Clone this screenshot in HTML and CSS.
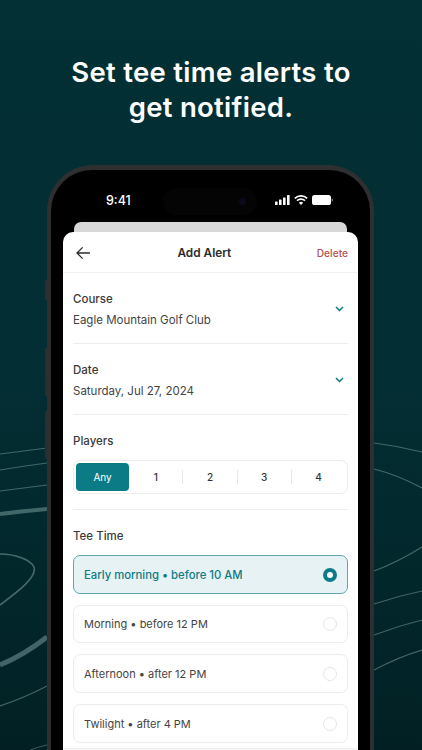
FILE: index.html
```html
<!DOCTYPE html>
<html lang="en">
<head>
<meta charset="utf-8">
<title>Add Alert</title>
<link rel="stylesheet" href="styles.css">
</head>
<body>
<main class="stage">
  <svg class="contours" viewBox="0 0 422 750" aria-hidden="true">
    <g fill="none" stroke="#5d8283">
      <path d="M0 454 Q24 451 47 448" stroke-width="1.2" opacity=".7"/>
      <path d="M0 470 Q24 466 47 463" stroke-width="1.2" opacity=".7"/>
      <path d="M0 491 Q24 488 47 485" stroke-width="1.2" opacity=".7"/>
      <path d="M0 514 Q24 511 47 509" stroke-width="4" opacity=".7"/>
      <path d="M0 554 C14 554 30 559 34 567 C37 577 20 590 0 605" stroke-width="1.6" opacity=".75"/>
      <path d="M0 665 Q24 655 47 637" stroke-width="5" opacity=".7"/>
      <path d="M0 706 Q24 698 47 686" stroke-width="1.2" opacity=".7"/>
      <path d="M30 750 Q38 747 47 745" stroke-width="1" opacity=".6"/>
      <path d="M374 443 Q398 446 422 452" stroke-width="1.2" opacity=".7"/>
      <path d="M374 469 Q398 475 422 488" stroke-width="1.2" opacity=".7"/>
      <path d="M374 571 Q398 562 422 547" stroke-width="1.2" opacity=".7"/>
      <path d="M374 604 Q398 596 422 591" stroke-width="1.2" opacity=".7"/>
      <path d="M374 635 Q398 626 422 620" stroke-width="1.2" opacity=".7"/>
      <path d="M374 670 Q398 657 422 650" stroke-width="1.2" opacity=".7"/>
    </g>
  </svg>

  <h1 class="headline">Set tee time alerts to<br>get notified.</h1>

  <div class="phone">
    <span class="side-btn side-a"></span>
    <span class="side-btn side-b"></span>
    <span class="side-btn side-c"></span>
    <div class="screen">
      <div class="status">
        <span class="clock">9:41</span>
        <span class="island"><span class="lens"></span></span>
        <span class="status-icons">
          <svg width="15" height="10" viewBox="0 0 15 10"><g fill="#fff"><rect x="0" y="6.5" width="2.6" height="3.5" rx=".6"/><rect x="4" y="4.5" width="2.6" height="5.5" rx=".6"/><rect x="8" y="2.5" width="2.6" height="7.5" rx=".6"/><rect x="12" y="0" width="2.6" height="10" rx=".6"/></g></svg>
          <svg width="14" height="10" viewBox="0 0 14 10"><g fill="none" stroke="#fff" stroke-width="1.6"><path d="M.8 3.4a9 9 0 0 1 12.4 0"/><path d="M3 5.7a5.8 5.8 0 0 1 8 0"/></g><path d="M7 10 4.9 7.8a3 3 0 0 1 4.2 0z" fill="#fff"/></svg>
          <svg width="21" height="10" viewBox="0 0 21 10"><rect x="0" y="0" width="19" height="10" rx="2.6" fill="#fff"/><path d="M19.7 3.4c.8.2 1.3.8 1.3 1.6s-.5 1.4-1.3 1.6z" fill="#8a8a8a"/></svg>
        </span>
      </div>
      <div class="sheet-back"></div>
      <section class="sheet">
        <header class="nav">
          <svg class="back" width="15" height="14" viewBox="0 0 15 14"><path d="M14 7H1.2M6.6 1.4 1 7l5.6 5.6" fill="none" stroke="#2b2b2b" stroke-width="1.3"/></svg>
          <h2 class="nav-title">Add Alert</h2>
          <span class="delete">Delete</span>
        </header>
        <div class="form">
          <div class="field">
            <div>
              <div class="label">Course</div>
              <div class="value">Eagle Mountain Golf Club</div>
            </div>
            <svg class="chev" width="9" height="6" viewBox="0 0 9 6"><path d="M1 1l3.5 3.5L8 1" fill="none" stroke="#0b7c85" stroke-width="1.5"/></svg>
          </div>
          <div class="field">
            <div>
              <div class="label">Date</div>
              <div class="value">Saturday, Jul 27, 2024</div>
            </div>
            <svg class="chev" width="9" height="6" viewBox="0 0 9 6"><path d="M1 1l3.5 3.5L8 1" fill="none" stroke="#0b7c85" stroke-width="1.5"/></svg>
          </div>
          <div class="players">
            <div class="label">Players</div>
            <div class="segments">
              <span class="seg seg-on">Any</span>
              <span class="seg seg-line">1</span>
              <span class="seg seg-line">2</span>
              <span class="seg seg-line">3</span>
              <span class="seg">4</span>
            </div>
          </div>
          <div class="tee">
            <div class="label">Tee Time</div>
            <div class="options">
              <div class="option option-on"><span>Early morning • before 10 AM</span><span class="radio radio-on"></span></div>
              <div class="option"><span>Morning • before 12 PM</span><span class="radio"></span></div>
              <div class="option"><span>Afternoon • after 12 PM</span><span class="radio"></span></div>
              <div class="option"><span>Twilight • after 4 PM</span><span class="radio"></span></div>
            </div>
          </div>
        </div>
        <div class="sheet-foot"></div>
      </section>
    </div>
  </div>
</main>
</body>
</html>
```
FILE: styles.css
```css
* { box-sizing: border-box; }
html, body { margin: 0; height: 100%; }
body { overflow: hidden; font-family: Inter, "Open Sans", "Liberation Sans", sans-serif; }

.stage {
  position: relative;
  width: 422px;
  height: 750px;
  overflow: hidden;
  background: linear-gradient(180deg, #033034 0%, #032e33 50%, #02282c 75%, #022024 100%);
  padding-top: 55px;
}
.contours { position: absolute; inset: 0; width: 422px; height: 750px; }

.headline {
  position: relative;
  margin: 0;
  color: #fff;
  font-size: 27.5px;
  line-height: 35px;
  font-weight: 560;
  text-align: center;
  letter-spacing: .3px;
}

.phone {
  position: relative;
  width: 327px;
  height: 640px;
  margin: 40px 0 0 47px;
  padding: 5px 4px 0;
  border-radius: 46px 46px 0 0;
  background: #2e2f30;
}
.side-btn { position: absolute; left: -2px; width: 2px; background: #2c2d2e; border-radius: 1px 0 0 1px; }
.side-a { top: 183px; height: 48px; }
.side-b { top: 246px; height: 48px; }
.side-c { top: 115px; height: 20px; }

.screen {
  height: 100%;
  padding: 0 12px;
  background: #000;
  border-radius: 41px 41px 0 0;
}

.status {
  position: relative;
  display: flex;
  align-items: center;
  justify-content: space-between;
  height: 52px;
  padding: 8px 0 0 55px;
  margin: 0 -12px;
  color: #fff;
  font-size: 12.5px;
  font-weight: 500;
}
.clock { letter-spacing: 0; }
.status-icons { display: flex; align-items: center; gap: 4px; margin-right: 37px; }
.island {
  position: absolute;
  left: 112px;
  top: 18px;
  width: 94px;
  height: 27px;
  border-radius: 14px;
  background: #040405;
}
.lens {
  position: absolute;
  right: 11px;
  top: 10px;
  width: 7px;
  height: 7px;
  border-radius: 50%;
  background: #0a0a1c;
}

.sheet-back {
  height: 10px;
  margin: 0 11px;
  background: #d8d8d8;
  border-radius: 7px 7px 0 0;
}
.sheet {
  height: 560px;
  background: #fff;
  border-radius: 10px 10px 0 0;
  color: #3a3a3a;
}

.nav {
  display: flex;
  align-items: center;
  justify-content: space-between;
  height: 41px;
  padding: 2px 10px 0 13px;
  border-bottom: 1px solid #efefef;
}
.nav-title { margin: 0 0 0 1px; font-size: 11.8px; font-weight: 600; color: #2b2b2b; }
.delete { font-size: 10.2px; font-weight: 500; color: #b5534f; }

.form { padding: 0 10px; }
.label { font-size: 11.5px; font-weight: 500; color: #3a3a3a; line-height: 16px; }
.value { font-size: 11.5px; color: #444; line-height: 16px; margin-top: 5px; }

.field {
  display: flex;
  align-items: center;
  justify-content: space-between;
  height: 71px;
  padding: 1px 4px 0 0;
  border-bottom: 1px solid #eeeeee;
}
.field > div { padding-top: 2px; }

.players {
  height: 95px;
  padding-top: 18px;
  border-bottom: 1px solid #eeeeee;
}
.segments {
  display: flex;
  align-items: center;
  height: 34px;
  margin-top: 11px;
  padding: 2px;
  border: 1px solid #ececec;
  border-radius: 7px;
}
.seg {
  flex: 1;
  display: flex;
  align-items: center;
  justify-content: center;
  height: 14px;
  font-size: 10px;
  font-weight: 500;
  color: #333;
}
.seg-line { border-right: 1px solid #e6e6e6; }
.seg-on {
  height: 28px;
  background: #0b7c85;
  color: #fff;
  font-weight: 400;
  border-radius: 4px;
}

.tee { padding-top: 18px; }
.options { display: flex; flex-direction: column; gap: 11px; margin-top: 11px; }
.option {
  display: flex;
  align-items: center;
  justify-content: space-between;
  height: 38.67px;
  padding: 1px 10px 0 10px;
  border: 1px solid #ececec;
  border-radius: 7px;
  font-size: 11px;
  color: #444;
}
.option-on {
  background: #e7f2f4;
  border-color: #5fa7ad;
  color: #0f7c85;
  font-size: 11.3px;
  font-weight: 500;
}
.radio {
  width: 14px;
  height: 14px;
  border: 1px solid #e6e6e6;
  border-radius: 50%;
  background: #fff;
}
.radio-on { border: 4px solid #0b7c85; }

.sheet-foot {
  height: 8px;
  margin-top: 5px;
  background: #f9f9f9;
  border-top: 1px solid #efefef;
}
```
